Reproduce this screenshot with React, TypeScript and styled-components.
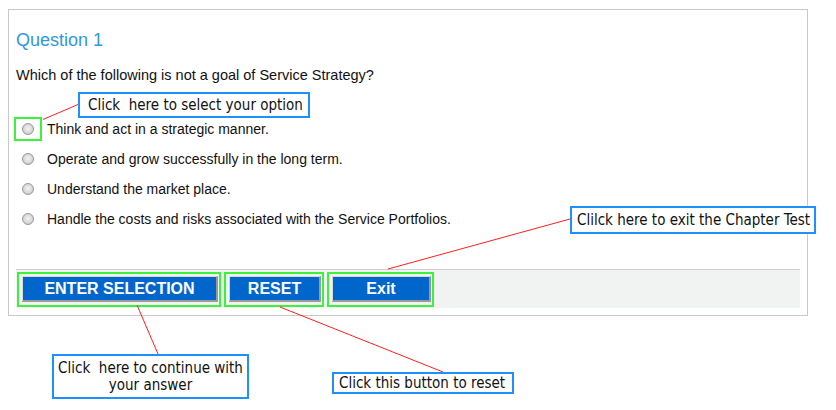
import React from "react";
import styled, { createGlobalStyle } from "styled-components";

const Global = createGlobalStyle`
  html, body { margin: 0; padding: 0; background: #fff; }
  body { font-family: "Liberation Sans", Arial, sans-serif; color: #111; }
`;

const Stage = styled.div`
  position: relative;
  width: 836px;
  height: 410px;
  overflow: hidden;
`;

const Panel = styled.div`
  box-sizing: border-box;
  margin: 9px 0 0 8px;
  width: 800px;
  height: 307px;
  border: 1px solid #c9c9c9;
  padding: 0 7px 7px 7px;
  display: flex;
  flex-direction: column;
`;

const Title = styled.h2`
  margin: 19px 0 0 0;
  font-size: 18px;
  font-weight: normal;
  line-height: 22px;
  color: #3198dc;
`;

const QuestionText = styled.p`
  margin: 15px 0 0 0;
  font-size: 14.5px;
  line-height: 18px;
`;

const Options = styled.div`
  margin-top: 30px;
  display: flex;
  flex-direction: column;
`;

const OptionRow = styled.label`
  display: flex;
  align-items: center;
  height: 30px;
  margin-left: -2px;
  font-size: 14px;
`;

const RadioCell = styled.span<{ $highlight?: boolean }>`
  box-sizing: border-box;
  width: 28px;
  height: 24px;
  display: flex;
  align-items: center;
  justify-content: center;
  margin-right: 5px;
  border: 2px solid ${(p) => (p.$highlight ? "#3cf03c" : "transparent")};
`;

const Radio = styled.input`
  appearance: none;
  margin: 0;
  width: 12px;
  height: 12px;
  border-radius: 50%;
  border: 1px solid #9a9a9a;
  background: radial-gradient(circle at 50% 45%, #f4f4f4 0%, #d8d8d8 55%, #bcbcbc 100%);
`;

const Spacer = styled.div`
  flex: 1;
`;

const Footer = styled.div`
  box-sizing: border-box;
  height: 39px;
  border-top: 1px solid #cfcfcf;
  background: #f1f2f2;
  display: flex;
  align-items: flex-start;
  padding: 2px 0 0 1px;
  gap: 3px;
`;

const Highlight = styled.div`
  border: 2px solid #3cf03c;
  padding: 2px 1px 3px 3px;
  display: flex;
`;

const Button = styled.button<{ $w: number }>`
  box-sizing: border-box;
  width: ${(p) => p.$w}px;
  height: 26px;
  margin: 0;
  padding: 1px 0 0 0;
  background: #0066cc;
  color: #fff;
  font-family: "Liberation Sans", Arial, sans-serif;
  font-weight: bold;
  font-size: 16px;
  border-style: solid;
  border-width: 1px 2px 2px 1px;
  border-color: #d8d8d8 #9a9a9a #9a9a9a #d8d8d8;
  cursor: pointer;
`;

const Callout = styled.div<{ $x: number; $y: number; $w: number; $h: number; $pad?: number; $center?: boolean }>`
  position: absolute;
  box-sizing: border-box;
  left: ${(p) => p.$x}px;
  top: ${(p) => p.$y}px;
  width: ${(p) => p.$w}px;
  height: ${(p) => p.$h}px;
  border: 2px solid #1e90ff;
  background: #fff;
  font-family: "DejaVu Sans Condensed", "DejaVu Sans", sans-serif;
  font-size: 15px;
  line-height: 17px;
  color: #111;
  white-space: pre;
  display: flex;
  flex-direction: column;
  justify-content: center;
  align-items: ${(p) => (p.$center ? "center" : "flex-start")};
  padding: 0 ${(p) => p.$pad ?? 5}px;
`;

const Lines = styled.svg`
  position: absolute;
  left: 0;
  top: 0;
  pointer-events: none;
`;

const options = [
  "Think and act in a strategic manner.",
  "Operate and grow successfully in the long term.",
  "Understand the market place.",
  "Handle the costs and risks associated with the Service Portfolios.",
];

export default function App() {
  return (
    <Stage>
      <Global />
      <Panel>
        <Title>Question 1</Title>
        <QuestionText>Which of the following is not a goal of Service Strategy?</QuestionText>
        <Options>
          {options.map((o, i) => (
            <OptionRow key={i}>
              <RadioCell $highlight={i === 0}>
                <Radio type="radio" name="q1" />
              </RadioCell>
              {o}
            </OptionRow>
          ))}
        </Options>
        <Spacer />
        <Footer>
          <Highlight>
            <Button $w={196}>ENTER SELECTION</Button>
          </Highlight>
          <Highlight>
            <Button $w={92}>RESET</Button>
          </Highlight>
          <Highlight>
            <Button $w={99}>Exit</Button>
          </Highlight>
        </Footer>
      </Panel>

      <Lines width={836} height={410}>
        <g stroke="#ff2020" strokeWidth={1}>
          <line x1={43} y1={119.5} x2={78} y2={104.5} />
          <line x1={388} y1={269} x2={570} y2={219} />
          <line x1={137} y1={305} x2={158} y2={354} />
          <line x1={280} y1={307} x2={443} y2={372} />
        </g>
      </Lines>

      <Callout $x={78} $y={92} $w={232} $h={26} $pad={8}>{"Click  here to select your option"}</Callout>
      <Callout $x={570} $y={206} $w={246} $h={28}>{"Clilck here to exit the Chapter Test"}</Callout>
      <Callout $x={52} $y={354} $w={197} $h={45} $center>
        <span>{"Click  here to continue with"}</span>
        <span>your answer</span>
      </Callout>
      <Callout $x={332} $y={372} $w={182} $h={22}>{"Click this button to reset "}</Callout>
    </Stage>
  );
}
